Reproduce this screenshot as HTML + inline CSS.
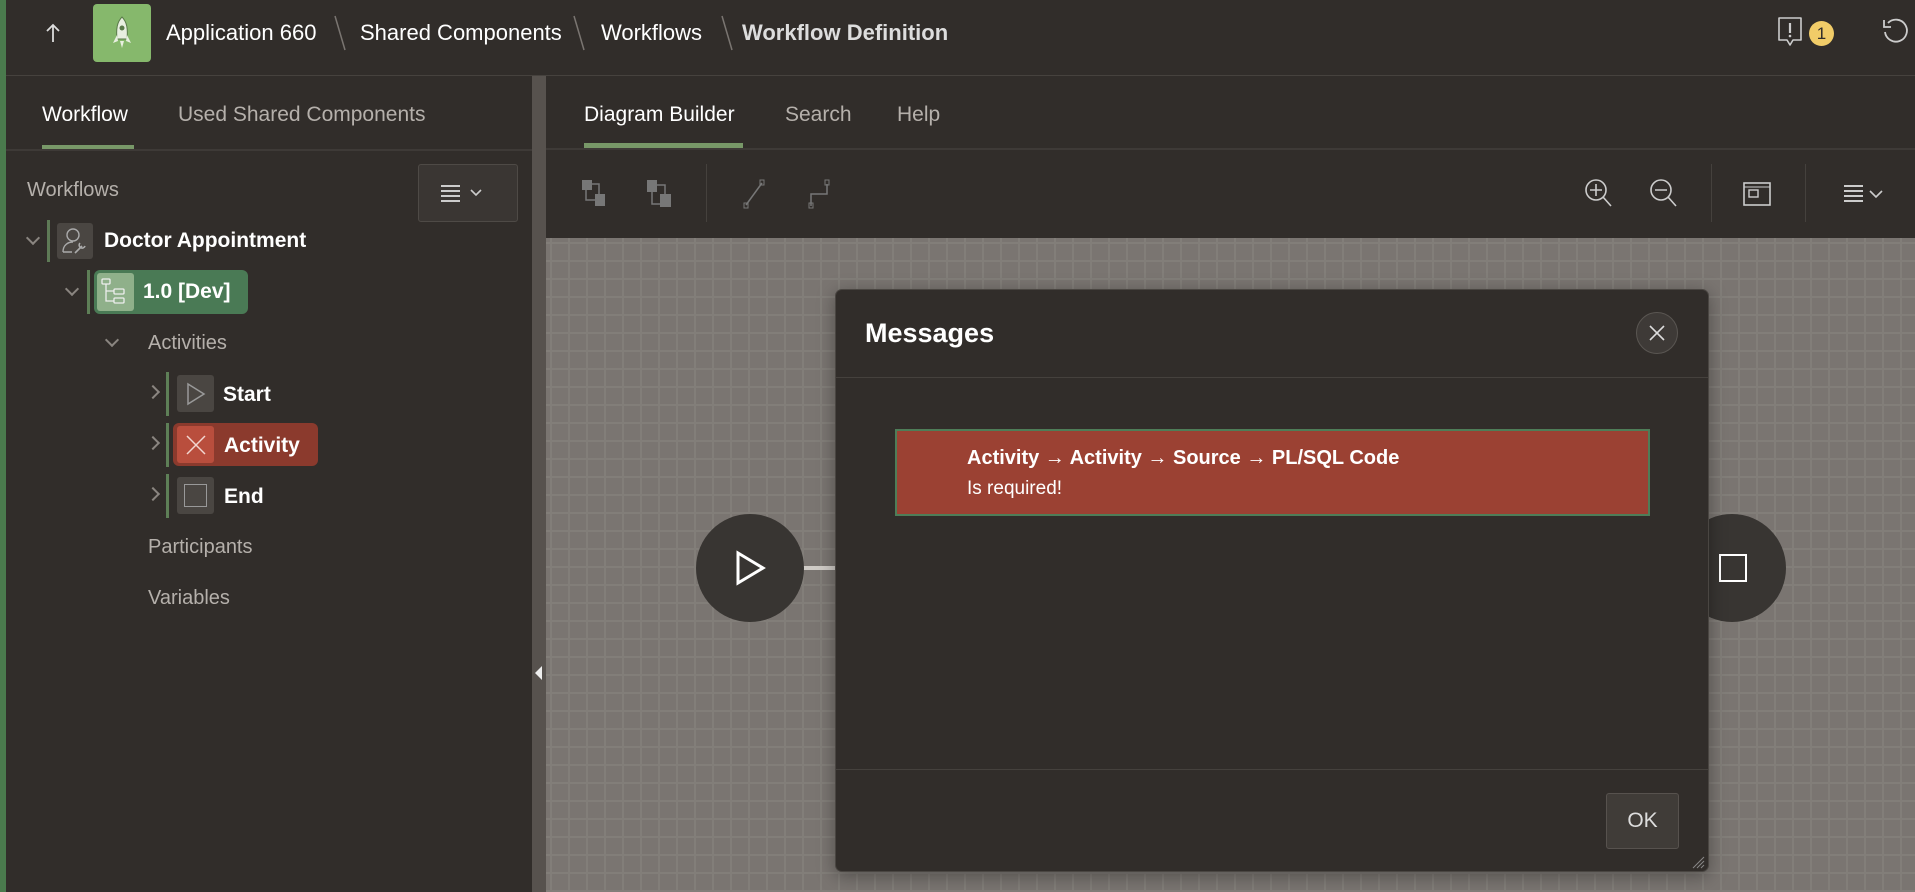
<!DOCTYPE html>
<html><head><meta charset="utf-8"><style>
*{box-sizing:border-box;margin:0;padding:0}
body{width:1915px;height:892px;overflow:hidden;background:#312d2a;font-family:"Liberation Sans",sans-serif;color:#fff;position:relative}
.a{position:absolute}
.t{position:absolute;white-space:nowrap;line-height:1}
.canvas{left:546px;top:238px;width:1369px;height:654px;background-color:#7a7571;
background-image:linear-gradient(#827e79 2px,transparent 2px),linear-gradient(90deg,#827e79 2px,transparent 2px);background-size:18px 18px;background-position:4px 4px}
.vl{position:absolute;width:3px;background:#5e7f57}
.chev{position:absolute;width:10px;height:10px;border-right:2px solid #8a8580;border-bottom:2px solid #8a8580}
</style></head><body>
<div class="a" style="left:0;top:0;width:6px;height:892px;background:#4a7a4d"></div>
<div class="a" style="left:6px;top:75px;width:1909px;height:1px;background:#46423e"></div>
<svg class="a" style="left:44px;top:22px" width="18" height="22" viewBox="0 0 18 22"><path d="M9 20V3M3 9l6-6 6 6" stroke="#ddd" stroke-width="1.8" fill="none"/></svg>
<div class="a" style="left:93px;top:4px;width:58px;height:58px;background:#86b86c;border-radius:4px"></div>
<svg class="a" style="left:109px;top:15px" width="26" height="36" viewBox="0 0 26 36"><path d="M13 2c5 5 6 12 5 22h-10C7 14 8 7 13 2z" fill="#e8efe0" stroke="#5a7a4a"/><circle cx="13" cy="13" r="2.5" fill="#5a7a4a"/><path d="M8 20l-4 8 5-2zM18 20l4 8-5-2z" fill="#e8efe0"/><path d="M11 26h4l-2 7z" fill="#e8efe0"/></svg>
<div class="t" style="left:166px;top:22px;font-size:22px;color:#fff">Application 660</div>
<svg class="a" style="left:333px;top:14px" width="14" height="38"><path d="M2 2l10 34" stroke="#7a7571" stroke-width="1.5"/></svg>
<div class="t" style="left:360px;top:22px;font-size:22px">Shared Components</div>
<svg class="a" style="left:572px;top:14px" width="14" height="38"><path d="M2 2l10 34" stroke="#7a7571" stroke-width="1.5"/></svg>
<div class="t" style="left:601px;top:22px;font-size:22px">Workflows</div>
<svg class="a" style="left:720px;top:14px" width="14" height="38"><path d="M2 2l10 34" stroke="#7a7571" stroke-width="1.5"/></svg>
<div class="t" style="left:742px;top:22px;font-size:22px;font-weight:bold;color:#ddd">Workflow Definition</div>
<svg class="a" style="left:1776px;top:16px" width="28" height="32" viewBox="0 0 28 32"><path d="M3 2h22v22H17l-3 5-3-5H3z" fill="none" stroke="#ccc" stroke-width="1.6" stroke-linejoin="round"/><path d="M14 7v10" stroke="#ccc" stroke-width="2.2"/><circle cx="14" cy="20" r="1.3" fill="#ccc"/></svg>
<div class="a" style="left:1809px;top:21px;width:25px;height:25px;border-radius:50%;background:#f1cc68;color:#312d2a;font-size:17px;text-align:center;line-height:25px">1</div>
<svg class="a" style="left:1880px;top:17px" width="30" height="30" viewBox="0 0 30 30"><path d="M8 6A11 11 0 1 1 5 15" fill="none" stroke="#ccc" stroke-width="1.8"/><path d="M4 3v7h7" fill="none" stroke="#ccc" stroke-width="1.8"/></svg>

<div class="t" style="left:42px;top:104px;font-size:21px">Workflow</div>
<div class="t" style="left:178px;top:104px;font-size:21px;color:#b5b0ab">Used Shared Components</div>
<div class="a" style="left:42px;top:145px;width:92px;height:4px;background:#789868"></div>
<div class="a" style="left:6px;top:149px;width:526px;height:2px;background:#3e3a37"></div>
<div class="t" style="left:27px;top:180px;font-size:20px;color:#b5b0ab">Workflows</div>
<div class="a" style="left:418px;top:164px;width:100px;height:58px;border:1px solid #4e4a46;border-radius:3px;background:#3a3633"></div>
<svg class="a" style="left:440px;top:184px" width="50" height="18"><path d="M1 2h19M1 7h19M1 12h19M1 17h19" stroke="#ccc" stroke-width="2"/><path d="M31 6l5 5 5-5" stroke="#ccc" stroke-width="1.6" fill="none"/></svg>

<div class="chev" style="left:28px;top:233px;transform:rotate(45deg)"></div>
<div class="vl" style="left:47px;top:220px;height:42px;background:#5e7a56"></div>
<div class="a" style="left:57px;top:223px;width:36px;height:36px;background:#4a4642;border-radius:3px"></div>
<svg class="a" style="left:60px;top:226px" width="30" height="30" viewBox="0 0 30 30"><circle cx="13" cy="9" r="6" fill="none" stroke="#aaa" stroke-width="1.4"/><path d="M3 26c0-7 5-10 10-10" fill="none" stroke="#aaa" stroke-width="1.4"/><path d="M3 26h9M15 27l7-7M20 17a3 3 0 1 0 5 3" fill="none" stroke="#aaa" stroke-width="1.6"/></svg>
<div class="t" style="left:104px;top:230px;font-size:21px;font-weight:bold">Doctor Appointment</div>

<div class="chev" style="left:67px;top:284px;transform:rotate(45deg)"></div>
<div class="vl" style="left:87px;top:270px;height:44px"></div>
<div class="a" style="left:94px;top:270px;width:154px;height:44px;background:#4a7a55;border-radius:6px"></div>
<div class="a" style="left:97px;top:273px;width:37px;height:38px;background:#8fb08a;border-radius:3px"></div>
<svg class="a" style="left:100px;top:277px" width="30" height="30" viewBox="0 0 30 30"><rect x="2" y="2" width="8" height="5" rx="1" fill="none" stroke="#eee" stroke-width="1.3"/><rect x="14" y="12" width="10" height="5" rx="1" fill="none" stroke="#eee" stroke-width="1.3"/><rect x="14" y="21" width="10" height="5" rx="1" fill="none" stroke="#eee" stroke-width="1.3"/><path d="M6 7v17h8M6 14h8" fill="none" stroke="#eee" stroke-width="1.3"/></svg>
<div class="t" style="left:143px;top:281px;font-size:21px;font-weight:bold">1.0 [Dev]</div>

<div class="chev" style="left:107px;top:335px;transform:rotate(45deg)"></div>
<div class="t" style="left:148px;top:333px;font-size:20px;color:#b5b0ab">Activities</div>

<div class="chev" style="left:148px;top:387px;transform:rotate(-45deg)"></div>
<div class="vl" style="left:166px;top:372px;height:44px"></div>
<div class="a" style="left:177px;top:375px;width:37px;height:37px;background:#4a4642;border-radius:3px"></div>
<svg class="a" style="left:184px;top:382px" width="24" height="24"><path d="M4 2l16 10-16 10z" fill="none" stroke="#999" stroke-width="1.5"/></svg>
<div class="t" style="left:223px;top:384px;font-size:21px;font-weight:bold">Start</div>

<div class="chev" style="left:148px;top:438px;transform:rotate(-45deg)"></div>
<div class="vl" style="left:166px;top:423px;height:44px"></div>
<div class="a" style="left:173px;top:423px;width:145px;height:43px;background:#8b3a2d;border-radius:6px"></div>
<div class="a" style="left:177px;top:426px;width:37px;height:37px;background:#b94e3d;border-radius:3px"></div>
<svg class="a" style="left:184px;top:433px" width="24" height="24"><path d="M3 3l18 18M21 3L3 21" stroke="#f2d6d0" stroke-width="1.5"/></svg>
<div class="t" style="left:224px;top:435px;font-size:21px;font-weight:bold">Activity</div>

<div class="chev" style="left:148px;top:489px;transform:rotate(-45deg)"></div>
<div class="vl" style="left:166px;top:474px;height:44px"></div>
<div class="a" style="left:177px;top:477px;width:37px;height:37px;background:#4a4642;border-radius:3px"></div>
<div class="a" style="left:184px;top:484px;width:23px;height:23px;border:1.5px solid #999"></div>
<div class="t" style="left:224px;top:486px;font-size:21px;font-weight:bold">End</div>

<div class="t" style="left:148px;top:537px;font-size:20px;color:#b5b0ab">Participants</div>
<div class="t" style="left:148px;top:588px;font-size:20px;color:#b5b0ab">Variables</div>

<div class="a" style="left:532px;top:76px;width:14px;height:816px;background:#57524e"></div>
<svg class="a" style="left:535px;top:666px" width="8" height="14"><path d="M7 0v14L0 7z" fill="#eee"/></svg>

<div class="t" style="left:584px;top:104px;font-size:21px">Diagram Builder</div>
<div class="t" style="left:785px;top:104px;font-size:21px;color:#b5b0ab">Search</div>
<div class="t" style="left:897px;top:104px;font-size:21px;color:#b5b0ab">Help</div>
<div class="a" style="left:584px;top:143px;width:159px;height:5px;background:#789868"></div>
<div class="a" style="left:546px;top:148px;width:1369px;height:2px;background:#3e3a37"></div>
<svg class="a" style="left:580px;top:178px" width="30" height="32"><rect x="2" y="2" width="10" height="10" fill="#777"/><rect x="15" y="16" width="10" height="12" fill="#777"/><rect x="6" y="6" width="13" height="16" fill="none" stroke="#777" stroke-width="1.5"/></svg>
<svg class="a" style="left:645px;top:178px" width="30" height="32"><rect x="2" y="2" width="10" height="12" fill="#777"/><rect x="15" y="16" width="11" height="13" fill="#777"/><path d="M12 7h8v9M7 14v12h8" fill="none" stroke="#777" stroke-width="1.5"/></svg>
<div class="a" style="left:706px;top:164px;width:1px;height:58px;background:#45413d"></div>
<svg class="a" style="left:740px;top:178px" width="30" height="32"><path d="M22 5L6 27" stroke="#777" stroke-width="1.5"/><rect x="20" y="2" width="4" height="5" fill="none" stroke="#777"/><rect x="4" y="25" width="4" height="5" fill="none" stroke="#777"/></svg>
<svg class="a" style="left:803px;top:178px" width="30" height="32"><path d="M24 6v10H8v12" fill="none" stroke="#777" stroke-width="1.5"/><rect x="22" y="2" width="4" height="5" fill="none" stroke="#777"/><rect x="6" y="25" width="4" height="5" fill="none" stroke="#777"/></svg>
<svg class="a" style="left:1583px;top:178px" width="34" height="32"><circle cx="13" cy="12" r="10" fill="none" stroke="#ccc" stroke-width="1.6"/><path d="M13 6v12M7 12h12M20 19l8 9" stroke="#ccc" stroke-width="1.6"/></svg>
<svg class="a" style="left:1648px;top:178px" width="34" height="32"><circle cx="13" cy="12" r="10" fill="none" stroke="#ccc" stroke-width="1.6"/><path d="M7 12h12M20 19l8 9" stroke="#ccc" stroke-width="1.6"/></svg>
<div class="a" style="left:1711px;top:164px;width:1px;height:58px;background:#45413d"></div>
<svg class="a" style="left:1742px;top:181px" width="30" height="26"><rect x="2" y="2" width="26" height="22" fill="none" stroke="#ccc" stroke-width="1.6"/><path d="M2 6h26" stroke="#ccc"/><rect x="7" y="9" width="9" height="7" fill="none" stroke="#ccc" stroke-width="1.4"/></svg>
<div class="a" style="left:1805px;top:164px;width:1px;height:58px;background:#45413d"></div>
<svg class="a" style="left:1843px;top:184px" width="50" height="20"><path d="M1 2h19M1 7h19M1 12h19M1 17h19" stroke="#ccc" stroke-width="2"/><path d="M27 7l6 6 6-6" stroke="#ccc" stroke-width="1.6" fill="none"/></svg>

<div class="a canvas"></div>
<div class="a" style="left:800px;top:566px;width:40px;height:4px;background:#cfcbc6"></div>
<div class="a" style="left:696px;top:514px;width:108px;height:108px;border-radius:50%;background:#383532"></div>
<svg class="a" style="left:732px;top:550px" width="36" height="36"><path d="M6 3l25 15L6 33z" fill="none" stroke="#fff" stroke-width="3"/></svg>
<div class="a" style="left:1678px;top:514px;width:108px;height:108px;border-radius:50%;background:#383532"></div>
<div class="a" style="left:1719px;top:554px;width:28px;height:28px;border:2.5px solid #fff"></div>

<div class="a" style="left:835px;top:289px;width:874px;height:583px;background:#312d2a;border:1px solid #4a4642;border-radius:7px;box-shadow:0 4px 18px rgba(0,0,0,.35)"></div>
<div class="t" style="left:865px;top:320px;font-size:27px;font-weight:bold">Messages</div>
<div class="a" style="left:1636px;top:312px;width:42px;height:42px;border-radius:50%;background:#3e3a37;border:1px solid #5a5652"></div>
<svg class="a" style="left:1648px;top:324px" width="18" height="18"><path d="M2 2l14 14M16 2L2 16" stroke="#ddd" stroke-width="1.6"/></svg>
<div class="a" style="left:836px;top:377px;width:872px;height:1px;background:#45413d"></div>
<div class="a" style="left:895px;top:429px;width:755px;height:87px;background:#9b4133;border:2px solid #4e7d58"></div>
<div class="t" style="left:967px;top:448px;font-size:20px;font-weight:bold">Activity → Activity → Source → PL/SQL Code</div>
<div class="t" style="left:967px;top:479px;font-size:19px">Is required!</div>
<div class="a" style="left:836px;top:769px;width:872px;height:1px;background:#45413d"></div>
<div class="a" style="left:1606px;top:793px;width:73px;height:56px;background:#403c38;border:1px solid #57524e;border-radius:3px;font-size:21px;color:#ddd;text-align:center;line-height:54px">OK</div>
<svg class="a" style="left:1691px;top:855px" width="14" height="14"><path d="M2 13L13 2M6 13l7-7M10 13l3-3" stroke="#888" stroke-width="1"/></svg>
</body></html>
